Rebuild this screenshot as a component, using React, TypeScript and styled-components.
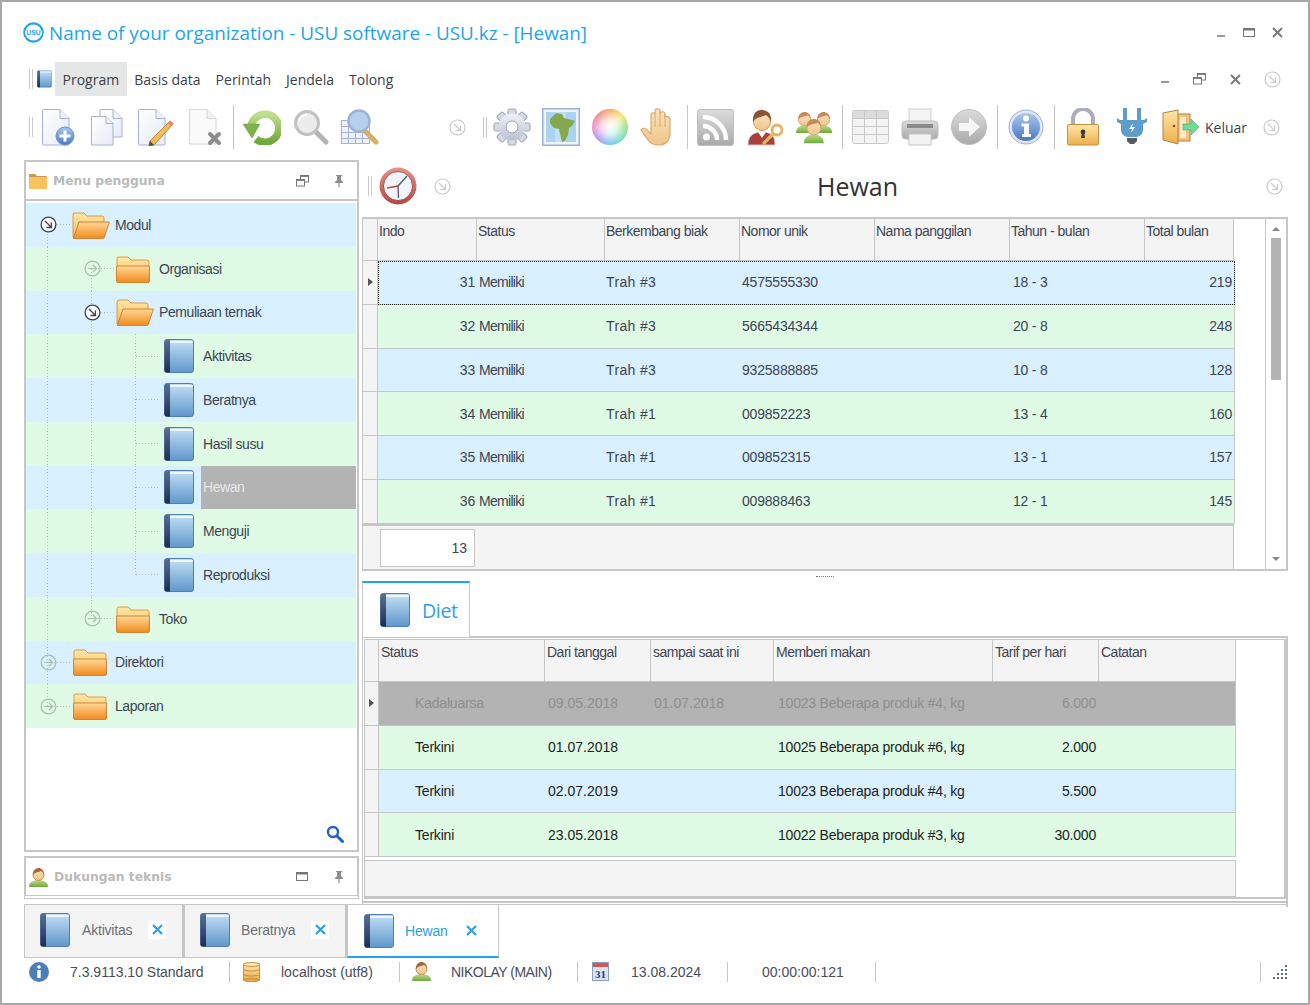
import React from 'react';
import styled, { createGlobalStyle } from 'styled-components';

const GlobalStyle = createGlobalStyle`
  html, body { margin: 0; padding: 0; background: #fff; }
  * { box-sizing: border-box; }
`;

const cellFont = `"Liberation Sans", Arial, sans-serif`;
const uiFont = `"Open Sans", "Noto Sans", sans-serif`;
const lineGray = '#c6c6c6';

/* ---------- icons ---------- */

const SharedDefs = () => (
  <svg width="0" height="0" style={{ position: 'absolute' }}>
    <defs>
      <linearGradient id="bookBody" x1="0" y1="0" x2="0" y2="1">
        <stop offset="0" stopColor="#c4e0f5" />
        <stop offset="1" stopColor="#5f97cc" />
      </linearGradient>
      <linearGradient id="bookSpine" x1="0" y1="0" x2="0" y2="1">
        <stop offset="0" stopColor="#5a6f96" />
        <stop offset="1" stopColor="#1f2d4c" />
      </linearGradient>
      <linearGradient id="folderBack" x1="0" y1="0" x2="0" y2="1">
        <stop offset="0" stopColor="#ffe9a8" />
        <stop offset="1" stopColor="#f7b85c" />
      </linearGradient>
      <linearGradient id="folderFront" x1="0" y1="0" x2="0" y2="1">
        <stop offset="0" stopColor="#ffd998" />
        <stop offset="1" stopColor="#f08a1d" />
      </linearGradient>
      <linearGradient id="paper" x1="0" y1="0" x2="1" y2="1">
        <stop offset="0" stopColor="#ffffff" />
        <stop offset="1" stopColor="#e6ebf7" />
      </linearGradient>
      <linearGradient id="greenRound" x1="0" y1="0" x2="0" y2="1">
        <stop offset="0" stopColor="#bfe08a" />
        <stop offset="1" stopColor="#6fa83c" />
      </linearGradient>
      <linearGradient id="steel" x1="0" y1="0" x2="0" y2="1">
        <stop offset="0" stopColor="#eef1f6" />
        <stop offset="1" stopColor="#b9c1d2" />
      </linearGradient>
      <linearGradient id="skin" x1="0" y1="0" x2="0" y2="1">
        <stop offset="0" stopColor="#fbe3bd" />
        <stop offset="1" stopColor="#f0c48a" />
      </linearGradient>
      <linearGradient id="grayRound" x1="0" y1="0" x2="0" y2="1">
        <stop offset="0" stopColor="#dcdcdc" />
        <stop offset="1" stopColor="#a9a9a9" />
      </linearGradient>
      <linearGradient id="blueRound" x1="0" y1="0" x2="0" y2="1">
        <stop offset="0" stopColor="#a9c8ee" />
        <stop offset="1" stopColor="#4a78c4" />
      </linearGradient>
      <linearGradient id="gold" x1="0" y1="0" x2="0" y2="1">
        <stop offset="0" stopColor="#fde7a8" />
        <stop offset="1" stopColor="#eeae4e" />
      </linearGradient>
      <linearGradient id="redRing" x1="0" y1="0" x2="0" y2="1">
        <stop offset="0" stopColor="#e8938a" />
        <stop offset="1" stopColor="#b5473f" />
      </linearGradient>
    </defs>
  </svg>
);

const BookIcon = ({ w = 30, h = 34 }: { w?: number; h?: number }) => (
  <svg width={w} height={h} viewBox="0 0 30 34">
    <rect x="0.5" y="0.5" width="29" height="33" rx="2.5" fill="url(#bookBody)" stroke="#4f7db5" />
    <path d="M0.5 3a2.5 2.5 0 0 1 2.5-2.5h3V33.5H3A2.5 2.5 0 0 1 .5 31z" fill="url(#bookSpine)" />
    <rect x="6" y="2" width="23" height="2" fill="#eef6fc" />
  </svg>
);

const FolderClosed = ({ w = 34, h = 28 }: { w?: number; h?: number }) => (
  <svg width={w} height={h} viewBox="0 0 34 28">
    <path d="M1 4a2 2 0 0 1 2-2h9l3 3h16a2 2 0 0 1 2 2v19H1z" fill="url(#folderBack)" stroke="#dc9a45" />
    <path d="M.6 11h32.8v15a1.6 1.6 0 0 1-1.6 1.6H2.2A1.6 1.6 0 0 1 .6 26z" fill="url(#folderFront)" stroke="#c8701a" strokeWidth=".8" />
  </svg>
);

const FolderOpen = () => (
  <svg width="38" height="28" viewBox="0 0 38 28">
    <path d="M1 26V4a2 2 0 0 1 2-2h9l3 3h15a2 2 0 0 1 2 2v6H8z" fill="url(#folderBack)" stroke="#dc9a45" />
    <path d="M7 11h30.4l-5 15.2a2 2 0 0 1-1.9 1.4H1.3z" fill="url(#folderFront)" stroke="#c8701a" strokeWidth=".8" />
  </svg>
);

const SmallArrow = () => (
  <svg width="17" height="17" viewBox="0 0 17 17" fill="none" stroke="#c9c9c9">
    <circle cx="8.5" cy="8.5" r="7.5" strokeWidth="1.2" />
    <path d="M5 5l6.2 6.2M11.5 6.5v5h-5" strokeWidth="1.2" />
  </svg>
);

const ToggleOpen = () => (
  <svg width="17" height="17" viewBox="0 0 17 17" fill="#fff" stroke="#3d4450">
    <circle cx="8.5" cy="8.5" r="7.4" strokeWidth="1.3" />
    <path d="M5 5l6 6M11.4 6.5v5h-5" fill="none" strokeWidth="1.3" />
  </svg>
);

const ToggleClosed = () => (
  <svg width="17" height="17" viewBox="0 0 17 17" fill="none" stroke="#a9bfae">
    <circle cx="8.5" cy="8.5" r="7.4" strokeWidth="1.2" />
    <path d="M4 8.5h8.5M9 5l3.6 3.5L9 12" strokeWidth="1.2" />
  </svg>
);

const MinimizeGlyph = () => (
  <svg width="10" height="10" viewBox="0 0 10 10"><rect x="1" y="7" width="8" height="2" fill="#9a9a9a" /></svg>
);
const MaximizeGlyph = () => (
  <svg width="12" height="10" viewBox="0 0 12 10" fill="none" stroke="#777"><rect x=".5" y=".5" width="11" height="8" /><path d="M0 1.5h12" strokeWidth="2" /></svg>
);
const RestoreGlyph = () => (
  <svg width="13" height="12" viewBox="0 0 13 12" fill="#fff" stroke="#777">
    <rect x="4.5" y=".5" width="8" height="6.5" /><path d="M4 1.4h9" />
    <rect x=".5" y="4.5" width="8" height="6.5" /><path d="M0 5.4h9" />
  </svg>
);
const CloseGlyph = ({ color = '#777', size = 11, weight = 1.8 }: { color?: string; size?: number; weight?: number }) => (
  <svg width={size} height={size} viewBox="0 0 11 11" stroke={color} strokeWidth={weight}>
    <path d="M1 1l9 9M10 1l-9 9" />
  </svg>
);
const PinGlyph = () => (
  <svg width="10" height="12" viewBox="0 0 10 12" fill="#8d8d8d">
    <path d="M2 0h6v1H7v4l2 2v1H5.6v4h-1.200V8H1V7l2-2V1H2z" />
  </svg>
);

const Page = ({ children, w = 38 }: { children?: React.ReactNode; w?: number }) => (
  <svg width={w} height="38" viewBox={`0 0 ${w} 38`}>
    <path d="M1.500 2.500a1 1 0 0 1 1-1H19l9 9V36a1 1 0 0 1-1 1H2.500a1 1 0 0 1-1-1z" fill="url(#paper)" stroke="#a6b2d4" />
    <path d="M19 1.500V10.500h9" fill="#eef1f8" stroke="#a6b2d4" />
    {children}
  </svg>
);

const DocAdd = () => (
  <Page w={34}>
    <circle cx="24" cy="28" r="9" fill="url(#blueRound)" stroke="#6d90bf" />
    <path d="M24 22.500v11M18.500 28h11" stroke="#fff" strokeWidth="3" />
  </Page>
);
const DocCopy = () => (
  <svg width="34" height="38" viewBox="0 0 34 38">
    <path d="M10 1.500h13l9 9V29H10z" fill="url(#paper)" stroke="#a6b2d4" />
    <path d="M23 1.500v9h9" fill="#eef1f8" stroke="#a6b2d4" />
    <path d="M1.500 8.500H16l7 7V37H1.500z" fill="url(#paper)" stroke="#a6b2d4" />
    <path d="M16 8.500v7h7" fill="#eef1f8" stroke="#a6b2d4" />
  </svg>
);
const DocEdit = () => (
  <Page>
    <path d="M33 13l3 3-19 21-5 1 1-5z" fill="#f4bd57" stroke="#b9843a" />
    <path d="M31 15l3 3 2.500-2.500-3-3z" fill="#e7837a" />
    <path d="M13 33l-1 5 5-1z" fill="#4a4a4a" />
  </Page>
);
const DocDelete = () => (
  <svg width="34" height="38" viewBox="0 0 34 38">
    <path d="M1.500 1.500H19l9 9V36H1.500z" fill="#fafafa" stroke="#d6d6d6" />
    <path d="M19 1.500v9h9" fill="#f1f1f1" stroke="#d6d6d6" />
    <path d="M22 26l9 9M31 26l-9 9" stroke="#8c8c8c" strokeWidth="4" strokeLinecap="round" />
  </svg>
);
const RefreshIcon = () => (
  <svg width="38" height="36" viewBox="0 0 38 36">
    <path d="M8 21a14 14 0 1 1 5 9" fill="none" stroke="url(#greenRound)" strokeWidth="7.500" />
    <path d="M0 15h17L9 29z" fill="#7fb14a" stroke="#6a9a3c" strokeWidth=".5" />
  </svg>
);
const MagnifierIcon = () => (
  <svg width="36" height="36" viewBox="0 0 36 36">
    <path d="M22 22l11 11" stroke="#b3b3b3" strokeWidth="5" strokeLinecap="round" />
    <circle cx="14" cy="14" r="11.500" fill="#ececec" stroke="#c2c2c2" strokeWidth="3" />
    <path d="M6 12a8 8 0 0 1 8-6" fill="none" stroke="#fff" strokeWidth="2" />
  </svg>
);
const TableSearchIcon = () => (
  <svg width="38" height="36" viewBox="0 0 38 36">
    <g fill="#eef1f9" stroke="#a6b2d4">
      <rect x=".5" y="11.500" width="28" height="23" />
      <path d="M.5 17.500h28M.5 23.500h28M.5 29.500h28M7.500 11.500v23M14.500 11.500v23M21.500 11.500v23" fill="none" />
    </g>
    <path d="M24 22l11 11" stroke="#dcae60" strokeWidth="5" strokeLinecap="round" />
    <circle cx="18" cy="12" r="10.500" fill="#b8d0f0" stroke="#9db3d3" strokeWidth="2.500" />
  </svg>
);
const GearIcon = () => (
  <svg width="38" height="38" viewBox="0 0 38 38">
    {[0, 45, 90, 135, 180, 225, 270, 315].map(a => (
      <rect key={a} x="15" y="1" width="8" height="9" rx="1.500" fill="#d3d9e5" stroke="#9aa3b8" transform={`rotate(${a} 19 19)`} />
    ))}
    <circle cx="19" cy="19" r="13.500" fill="url(#steel)" />
    <circle cx="19" cy="19" r="6" fill="#fff" stroke="#9aa3b8" />
  </svg>
);
const MapIcon = () => (
  <svg width="38" height="38" viewBox="0 0 38 38">
    <rect x=".75" y=".75" width="36.500" height="36.500" fill="#eef3fb" stroke="#9fb0d6" strokeWidth="1.500" />
    <rect x="4" y="4" width="30" height="30" fill="#a9d3ee" />
    <rect x="13" y="4" width="11" height="30" fill="#c2e0f3" />
    <path d="M8 11l6-6 6 1 2 4 8 2 3 1-3 5-3 2-1 7-3 6-3 1-2-8-1-5-5-1-4-5z" fill="#84a84f" />
  </svg>
);
const HandIcon = () => (
  <svg width="37" height="38" viewBox="0 0 37 38">
    <path d="M1 22c2-3 5-2 7 1l3 3V7c0-3 4-3 4 0V3c0-3 5-3 5 0v3c0-3 5-3 5 0v4c0-2 5-2 5 1v14c0 8-5 12-11 12-6 0-9-2-11-5z" fill="url(#skin)" stroke="#dbab6e" strokeWidth="1.200" />
    <path d="M15 7v12M20 5v14M25 6v13" stroke="#dbab6e" fill="none" />
  </svg>
);
const RssIcon = () => (
  <svg width="37" height="37" viewBox="0 0 37 37">
    <rect x=".5" y=".5" width="36" height="36" rx="2.500" fill="url(#grayRound)" stroke="#bcbcbc" />
    <circle cx="9.500" cy="28" r="3.500" fill="#fff" />
    <path d="M6 17a14 14 0 0 1 14 14M6 8a23 23 0 0 1 23 23" fill="none" stroke="#fff" strokeWidth="4.500" />
  </svg>
);
const UserKeyIcon = () => (
  <svg width="36" height="38" viewBox="0 0 36 38">
    <path d="M1 37c0-8 4-13 14-13s13 5 13 13z" fill="#a9403b" stroke="#c9c9c9" />
    <path d="M11 24l4 6 4-6z" fill="#fff" />
    <circle cx="15" cy="14" r="8.500" fill="url(#skin)" stroke="#d19a65" />
    <path d="M6 14c-1-9 5-13 10-12s9 4 8 12c-1-4-3-6-5-7-4 2-10 2-13 7z" fill="#8d5630" />
    <circle cx="30" cy="22" r="5" fill="none" stroke="#e5b661" strokeWidth="2.800" />
    <path d="M26.500 25.500L16 36" stroke="#e5b661" strokeWidth="3.200" />
  </svg>
);
const Person = ({ x, y, s = 1 }: { x: number; y: number; s?: number }) => (
  <g transform={`translate(${x} ${y}) scale(${s})`}>
    <path d="M0 22c0-5 4-8 9-8s9 3 9 8z" fill="url(#greenRound)" />
    <circle cx="9" cy="8" r="6.500" fill="url(#skin)" stroke="#d19a65" strokeWidth=".8" />
    <path d="M2.500 8C2 2 6 0 9 0s7 2 6.500 8c-1-3-2-4-3-4.500-3 1.500-8 1-10 4.500z" fill="#c7885a" />
  </g>
);
const UsersIcon = () => (
  <svg width="38" height="36" viewBox="0 0 38 36">
    <Person x={1} y={3} s={0.95} />
    <Person x={20} y={3} s={0.95} />
    <Person x={9} y={10} s={1.1} />
  </svg>
);
const GridIcon = () => (
  <svg width="37" height="34" viewBox="0 0 37 34">
    <rect x=".5" y=".5" width="36" height="33" rx="2" fill="#f4f4f4" stroke="#c8c8c8" />
    <rect x="1" y="1" width="35" height="7" fill="#dcdcdc" />
    <path d="M1 8.500h35M1 16.500h35M1 24.500h35M12.500 1v32M24.500 1v32" stroke="#c8c8c8" />
  </svg>
);
const PrinterIcon = () => (
  <svg width="38" height="38" viewBox="0 0 38 38">
    <rect x="8" y="1" width="22" height="16" fill="#f3f3f3" stroke="#cfcfcf" />
    <rect x="1" y="13" width="36" height="18" rx="4" fill="url(#grayRound)" stroke="#bdbdbd" />
    <rect x="6" y="16" width="26" height="4" fill="#8b8b8b" />
    <rect x="8" y="26" width="22" height="11" fill="#f2f2f2" stroke="#c6c6c6" />
  </svg>
);
const ArrowCircleIcon = () => (
  <svg width="36" height="36" viewBox="0 0 36 36">
    <circle cx="18" cy="18" r="17.500" fill="url(#grayRound)" stroke="#bdbdbd" />
    <path d="M8 14h10V8l11 10-11 10v-6H8z" fill="#f6f6f6" />
  </svg>
);
const InfoIcon = ({ size = 36 }: { size?: number }) => (
  <svg width={size} height={size} viewBox="0 0 36 36">
    <circle cx="18" cy="18" r="17" fill="#dfe7f7" stroke="#9bb0d8" />
    <circle cx="18" cy="18" r="14" fill="url(#blueRound)" />
    <circle cx="18" cy="9.500" r="3" fill="#fff" />
    <path d="M13.500 14.500H21V25h2v3H14v-3h2v-7.500h-2.500z" fill="#fff" />
  </svg>
);
const StatusInfo = () => (
  <svg width="20" height="20" viewBox="0 0 20 20">
    <circle cx="10" cy="10" r="10" fill="#4a7fb8" />
    <circle cx="10" cy="5" r="1.800" fill="#fff" />
    <rect x="8.300" y="8" width="3.400" height="8" fill="#fff" />
  </svg>
);
const LockIcon = () => (
  <svg width="32" height="38" viewBox="0 0 32 38">
    <path d="M6 18V11a10 10 0 0 1 20 0v7" fill="none" stroke="#a9aeb9" strokeWidth="4" />
    <rect x=".5" y="16.500" width="31" height="20.500" rx="1.500" fill="url(#gold)" stroke="#c98f3c" />
    <circle cx="16" cy="24" r="2.400" fill="#3d3d3d" />
    <path d="M14.800 25h2.400l.8 5h-4z" fill="#3d3d3d" />
  </svg>
);
const PlugIcon = () => (
  <svg width="30" height="38" viewBox="0 0 30 38">
    <rect x="6" y="0" width="4" height="12" fill="#5d9ccb" />
    <rect x="20" y="0" width="4" height="12" fill="#5d9ccb" />
    <path d="M0 10l3 2h24l3-2v4l-4 2v6a7 7 0 0 1-7 7h-8a7 7 0 0 1-7-7v-6l-4-2z" fill="#5d9ccb" />
    <path d="M16 15l-4 6h3l-1 4 4-6h-3z" fill="#fff" />
    <path d="M10 30h10v3l-3 3h-4l-3-3z" fill="#55585e" />
  </svg>
);
const ExitIcon = () => (
  <svg width="38" height="36" viewBox="0 0 38 36">
    <rect x="13" y="5" width="15" height="27" fill="#f2c27e" stroke="#b5813e" />
    <rect x="18" y="8" width="6" height="21" fill="#fbe9c8" />
    <path d="M1 4l15-3v34L1 31z" fill="url(#gold)" stroke="#b5813e" />
    <circle cx="12" cy="17" r="1.300" fill="#7a5324" />
    <path d="M21 15h8v-5l8 8-8 8v-5h-8z" fill="#6fdc97" stroke="#4eb276" strokeWidth=".7" />
  </svg>
);
const ClockIcon = () => (
  <svg width="38" height="38" viewBox="0 0 38 38">
    <circle cx="19" cy="19" r="18.500" fill="url(#redRing)" />
    <circle cx="19" cy="19" r="14.500" fill="#f1f5fa" stroke="#8c3b35" strokeWidth=".8" />
    <path d="M19 19L28 9" stroke="#4c5668" strokeWidth="1.300" />
    <path d="M19 19L19.500 31" stroke="#4c5668" strokeWidth="1.300" />
    <path d="M19 19L8 21" stroke="#c4433b" strokeWidth="1.300" />
  </svg>
);
const UsuLogo = () => (
  <svg width="21" height="21" viewBox="0 0 21 21">
    <circle cx="10.500" cy="10.500" r="9.200" fill="none" stroke="#1fa3ee" strokeWidth="2.200" />
    <rect x="2" y="7.500" width="17" height="6" rx="2.500" fill="#fff" />
    <text x="10.500" y="13" textAnchor="middle" fontSize="6.800" fontWeight="700" fill="#1fa3ee" fontFamily="Liberation Sans, sans-serif">USU</text>
  </svg>
);
const UserSmall = () => (
  <svg width="19" height="19" viewBox="0 0 19 19">
    <path d="M0 19c0-5 4-7 9.500-7s9.500 2 9.500 7z" fill="url(#greenRound)" />
    <circle cx="9.500" cy="7" r="5.500" fill="url(#skin)" stroke="#c98d5a" />
    <path d="M4 7c-.5-5 3-7 5.500-7S15.500 2 15 7c-1-3-2-3.500-3-4-2 1-6 1-8 4z" fill="#a9673d" />
  </svg>
);
const DbIcon = () => (
  <svg width="17" height="20" viewBox="0 0 17 20">
    <rect x=".5" y="2" width="16" height="16" fill="url(#gold)" stroke="#c98f3c" />
    <ellipse cx="8.500" cy="2.500" rx="8" ry="2" fill="#fde7b0" stroke="#c98f3c" />
    <ellipse cx="8.500" cy="18" rx="8" ry="1.600" fill="#eda941" stroke="#c98f3c" />
    <path d="M.5 7.500c3 2 13 2 16 0M.5 12.500c3 2 13 2 16 0" fill="none" stroke="#c98f3c" />
  </svg>
);
const CalendarIcon = () => (
  <svg width="17" height="19" viewBox="0 0 17 19">
    <rect x=".5" y=".5" width="16" height="18" fill="#dbe4f4" stroke="#8e9dbe" />
    <rect x="1" y="1" width="15" height="4" fill="#d2594f" />
    <text x="8.500" y="16" textAnchor="middle" fontSize="11" fontWeight="700" fill="#2a3f6c" fontFamily="Liberation Serif, serif">31</text>
  </svg>
);
const SearchBlue = () => (
  <svg width="18" height="18" viewBox="0 0 18 18" fill="none" stroke="#2463c0">
    <circle cx="7" cy="7" r="5" strokeWidth="2.400" />
    <path d="M11 11l5.500 5.500" strokeWidth="3" strokeLinecap="round" />
  </svg>
);
const FolderFlat = () => (
  <svg width="18" height="16" viewBox="0 0 18 16">
    <path d="M0 2a1 1 0 0 1 1-1h5l2 2h9a1 1 0 0 1 1 1v11H0z" fill="#c69a4a" />
    <rect y="4" width="18" height="12" fill="#fcc15f" />
  </svg>
);
const GripDots = () => (
  <svg width="15" height="15" viewBox="0 0 15 15" fill="#5b6b80">
    {[[12, 1], [12, 5], [8, 5], [12, 9], [8, 9], [4, 9], [12, 13], [8, 13], [4, 13], [0, 13]].map(([x, y]) => (
      <rect key={`${x}-${y}`} x={x} y={y} width="2" height="2" />
    ))}
  </svg>
);

/* ---------- window chrome ---------- */

const Window = styled.div`
  width: 1310px;
  height: 1005px;
  border: 2px solid #a8a8a8;
  background: #fff;
  display: flex;
  flex-direction: column;
  overflow: hidden;
  font-family: ${cellFont};
`;

const TitleBar = styled.div`
  height: 60px;
  flex: none;
  display: flex;
  align-items: center;
  padding: 1px 25px 0 21px;
`;

const TitleText = styled.div`
  margin-left: 5px;
  flex: 1;
  font-family: ${uiFont};
  font-size: 18.900px;
  color: #1fa3ee;
`;

const TitleControls = styled.div`
  display: flex;
  align-items: center;
  gap: 17px;
`;

const MenuBar = styled.div`
  height: 34px;
  flex: none;
  display: flex;
  align-items: center;
  padding-left: 27px;
`;

const Grip = styled.div`
  width: 4px;
  height: 20px;
  flex: none;
  border-left: 1px solid #c9c9c9;
  border-right: 1px solid #c9c9c9;
`;

const MenuIcon = styled.div`
  display: flex;
  margin: 0 3px 0 4px;
`;

const MenuItem = styled.div<{ $active?: boolean }>`
  height: 34px;
  padding: 0 7.500px;
  display: flex;
  align-items: center;
  font-family: ${uiFont};
  font-size: 14px;
  color: #3c3f4a;
  background: ${({ $active }) => ($active ? '#e5e6e6' : 'transparent')};
`;

const MenuControls = styled.div`
  margin-left: auto;
  padding-right: 18px;
  display: flex;
  align-items: center;
`;

const MenuControl = styled.div<{ $width: number }>`
  width: ${({ $width }) => $width}px;
  display: flex;
  justify-content: center;
`;

const Toolbar = styled.div`
  height: 46px;
  margin-top: 8px;
  flex: none;
  display: flex;
  align-items: center;
  padding-left: 27px;
`;

const ToolButton = styled.div`
  width: 49px;
  height: 46px;
  flex: none;
  display: flex;
  align-items: center;
  justify-content: center;
`;

const ToolSep = styled.div`
  width: 1px;
  height: 44px;
  flex: none;
  margin: 0 3.500px;
  background: #c4c4c4;
`;

const ToolArrow = styled.div<{ $left: number }>`
  margin-left: ${({ $left }) => $left}px;
  display: flex;
`;

const ToolLabel = styled.div`
  font-family: ${uiFont};
  font-size: 14px;
  color: #3c3f4a;
`;

const ColorWheel = styled.div`
  width: 36px;
  height: 36px;
  border-radius: 50%;
  background:
    radial-gradient(circle, #ffffff 0%, rgba(255, 255, 255, 0.75) 30%, rgba(255, 255, 255, 0) 75%),
    conic-gradient(#f7a35c, #f2e36b, #8ee07a, #5fdcb0, #6cc3ee, #a690ea, #e987c8, #f27f7f, #f7a35c);
`;

/* ---------- main area ---------- */

const Main = styled.div`
  height: 747px;
  margin-top: 10px;
  flex: none;
  display: flex;
  gap: 3px;
  padding-left: 22px;
`;

const LeftColumn = styled.div`
  width: 335px;
  flex: none;
  display: flex;
  flex-direction: column;
`;

const MenuPanel = styled.div`
  height: 692px;
  flex: none;
  border: 2px solid ${lineGray};
  display: flex;
  flex-direction: column;
`;

const PanelHeader = styled.div`
  height: 39px;
  flex: none;
  display: flex;
  align-items: center;
  padding: 1px 0 0 3px;
  border-bottom: 2px solid ${lineGray};
`;

const SupportPanel = styled.div`
  height: 43px;
  margin-top: 4px;
  flex: none;
  border: 2px solid ${lineGray};
  border-bottom-width: 4px;
  border-bottom-style: double;
  display: flex;
  align-items: center;
  padding: 1px 0 0 3px;
`;

const PanelTitle = styled.div`
  flex: 1;
  margin-left: 6px;
  font-family: "DejaVu Sans", sans-serif;
  font-weight: 700;
  font-size: 12.300px;
  color: #bababa;
`;

const PanelButton = styled.div<{ $width: number }>`
  width: ${({ $width }) => $width}px;
  display: flex;
  justify-content: center;
`;

const TreeArea = styled.div`
  flex: 1;
  padding: 2px 1px 0 0;
  display: flex;
  flex-direction: column;
`;

const TreeRow = styled.div<{ $tone: 'blue' | 'green' }>`
  height: 43.750px;
  flex: none;
  display: flex;
  background: ${({ $tone }) => ($tone === 'blue' ? '#d8f0ff' : '#dffbe5')};
`;

const dotted = 'repeating-linear-gradient(to bottom, #b9b9b9 0 1px, transparent 1px 3px)';
const dottedH = 'repeating-linear-gradient(to right, #b9b9b9 0 1px, transparent 1px 3px)';

/* a 44px indent column that carries the tree's dotted connector lines */
const Indent = styled.div<{ $line?: 'full' | 'top' | 'bottom'; $branch?: boolean }>`
  width: 44px;
  flex: none;
  display: flex;
  align-items: center;
  justify-content: center;
  background-image: ${({ $line }) => ($line ? dotted : 'none')}, ${({ $branch }) => ($branch ? dottedH : 'none')};
  background-repeat: no-repeat;
  background-position:
    21px ${({ $line }) => ($line === 'bottom' ? '100%' : '0')},
    100% 50%;
  background-size:
    1px ${({ $line }) => ($line === 'full' ? '100%' : '50%')},
    22px 1px;
`;

const NodeIcon = styled.div<{ $width: number; $pad: number }>`
  width: ${({ $width }) => $width}px;
  flex: none;
  display: flex;
  align-items: center;
  padding-left: ${({ $pad }) => $pad}px;
`;

const NodeLabel = styled.div<{ $selected?: boolean; $pad?: number }>`
  flex: ${({ $selected }) => ($selected ? 1 : 'none')};
  display: flex;
  align-items: center;
  padding-left: ${({ $pad }) => $pad ?? 1}px;
  font-size: 14px;
  letter-spacing: -0.420px;
  color: ${({ $selected }) => ($selected ? '#e8e8e8' : '#3d4453')};
  background: ${({ $selected }) => ($selected ? '#b3b3b3' : 'transparent')};
`;

const TreeFooter = styled.div`
  margin-top: auto;
  padding: 0 12px 7px 0;
  display: flex;
  justify-content: flex-end;
`;

/* ---------- right side ---------- */

const RightColumn = styled.div`
  width: 926px;
  flex: none;
  display: flex;
  flex-direction: column;
`;

const FormHeader = styled.div`
  height: 57px;
  flex: none;
  padding: 0 5px 5px 6px;
  display: flex;
  align-items: center;
`;

const FormClock = styled.div`
  margin-left: 7px;
  display: flex;
`;

const FormTitle = styled.div`
  flex: 1;
  text-align: center;
  font-family: ${uiFont};
  font-size: 25px;
  color: #333;
  padding-right: 2px;
`;

const MasterBox = styled.div`
  height: 354px;
  flex: none;
  border: 2px solid ${lineGray};
  border-left-width: 1px;
  display: flex;
`;

const GridWrap = styled.div<{ $width: number }>`
  width: ${({ $width }) => $width}px;
  flex: none;
  display: flex;
  flex-direction: column;
`;

const HeaderRow = styled.div<{ $cols: string; $height: number }>`
  height: ${({ $height }) => $height}px;
  flex: none;
  display: grid;
  grid-template-columns: ${({ $cols }) => $cols};
  background: #f4f4f4;
  border-bottom: 1px solid ${lineGray};
`;

const HeaderCell = styled.div<{ $pad: number }>`
  padding: 4px 0 0 ${({ $pad }) => $pad}px;
  font-size: 14px;
  letter-spacing: -0.500px;
  color: #3d4453;
  border-right: 1px solid ${lineGray};
  white-space: nowrap;
`;

const RowTone: Record<string, string> = {
  blue: '#d8f0ff',
  green: '#dffbe5',
  gray: '#b3b3b3',
};

const DataRow = styled.div<{ $cols: string }>`
  height: 43.750px;
  flex: none;
  display: grid;
  grid-template-columns: ${({ $cols }) => $cols};
  align-items: stretch;
`;

const Indicator = styled.div`
  background: #f4f4f4;
  border-right: 1px solid ${lineGray};
  border-bottom: 1px solid ${lineGray};
  display: flex;
  align-items: center;
  justify-content: center;
`;

const Triangle = styled.div`
  width: 0;
  height: 0;
  border-top: 4.500px solid transparent;
  border-bottom: 4.500px solid transparent;
  border-left: 5px solid #555;
`;

const RowBody = styled.div<{ $tone: string; $focus?: boolean; $cols: string }>`
  display: grid;
  grid-template-columns: ${({ $cols }) => $cols};
  background: ${({ $tone }) => RowTone[$tone]};
  border-bottom: 1px solid ${lineGray};
  border-right: 1px solid ${lineGray};
  outline: ${({ $focus }) => ($focus ? '1px dotted #222' : 'none')};
  outline-offset: -1px;
`;

const Cell = styled.div<{ $right?: boolean; $muted?: boolean; $dark?: boolean; $pad?: number; $spacing?: number }>`
  display: flex;
  align-items: center;
  justify-content: ${({ $right }) => ($right ? 'flex-end' : 'flex-start')};
  padding: ${({ $right, $pad }) => ($right ? `0 ${$pad ?? 3}px 0 0` : `0 0 0 ${$pad ?? 2}px`)};
  font-size: 14px;
  letter-spacing: ${({ $spacing }) => $spacing ?? -0.2}px;
  white-space: nowrap;
  color: ${({ $muted, $dark }) => ($muted ? '#8e8e8e' : $dark ? '#222' : '#3d4453')};
`;

const MasterFooter = styled.div`
  flex: 1;
  background: #f4f4f4;
  border-top: 2px solid ${lineGray};
  border-right: 1px solid ${lineGray};
  padding: 3px 0 0 17px;
`;

const CountBox = styled.div`
  width: 95px;
  height: 38px;
  border: 1px solid ${lineGray};
  background: #fff;
  display: flex;
  align-items: center;
  justify-content: flex-end;
  padding-right: 7px;
  font-size: 14px;
  color: #3d4453;
`;

const Blank = styled.div`
  flex: 1;
`;

const Scrollbar = styled.div`
  width: 21px;
  flex: none;
  border-left: 1px solid ${lineGray};
  display: flex;
  flex-direction: column;
  align-items: center;
  padding: 8px 0;
`;

const ArrowUp = styled.div`
  width: 0;
  height: 0;
  border-left: 4px solid transparent;
  border-right: 4px solid transparent;
  border-bottom: 4px solid #888;
`;

const ArrowDown = styled(ArrowUp)`
  margin-top: auto;
  border-bottom: 0;
  border-top: 4px solid #888;
`;

const Thumb = styled.div`
  width: 10px;
  height: 142px;
  margin-top: 7px;
  background: #b3b3b3;
`;

const Splitter = styled.div`
  height: 10px;
  flex: none;
  display: flex;
  justify-content: center;
  align-items: center;
`;

const SplitterDots = styled.div`
  width: 18px;
  border-top: 1px dotted #777;
`;

const DetailTabRow = styled.div`
  height: 55px;
  flex: none;
  display: flex;
`;

const DetailTab = styled.div`
  width: 108px;
  height: 56px;
  display: flex;
  align-items: center;
  gap: 12px;
  padding-left: 17px;
  background: #fff;
  border-top: 2px solid #1fa3ee;
  border-right: 1px solid ${lineGray};
  border-left: 1px solid ${lineGray};
  position: relative;
  z-index: 1;
  font-family: ${uiFont};
  font-size: 19.500px;
  letter-spacing: -0.300px;
  color: #2d9fe8;
`;

const DetailPanel = styled.div`
  height: 271px;
  flex: none;
  border: 2px solid ${lineGray};
  border-left-width: 1px;
  border-bottom: 0;
  padding: 1px 0 0 1px;
  display: flex;
  flex-direction: column;
`;

const DetailInner = styled.div`
  height: 260px;
  flex: none;
  border-top: 1px solid ${lineGray};
  border-left: 1px solid ${lineGray};
  border-right: 2px solid ${lineGray};
  border-bottom: 2px solid ${lineGray};
  display: flex;
  flex-direction: column;
`;

const DetailFooter = styled.div`
  width: 871px;
  height: 37px;
  margin-top: 3px;
  flex: none;
  background: #f4f4f4;
  border: 1px solid ${lineGray};
  border-left-width: 0;
`;

const DetailEdge = styled.div`
  margin: 2px 0 0 -2px;
  height: 4px;
  border-top: 2px solid ${lineGray};
  border-bottom: 1px solid ${lineGray};
`;

/* ---------- bottom ---------- */

const TabStrip = styled.div`
  height: 54px;
  margin-top: -3px;
  flex: none;
  display: flex;
  padding-left: 22px;
  position: relative;
`;

const DocTab = styled.div<{ $active?: boolean; $width: number }>`
  width: ${({ $width }) => $width}px;
  height: 54px;
  flex: none;
  display: flex;
  align-items: center;
  padding-left: ${({ $active }) => ($active ? 16 : 15)}px;
  padding-bottom: ${({ $active }) => ($active ? 0 : 3)}px;
  background: ${({ $active }) => ($active ? '#fff' : '#f4f4f4')};
  border: 1px solid ${lineGray};
  border-right-width: ${({ $active }) => ($active ? 1 : 2)}px;
  border-bottom: ${({ $active }) => ($active ? '2px solid #1fa3ee' : `1px solid ${lineGray}`)};
`;

const DocTabLabel = styled.div<{ $active?: boolean; $gap: number; $width: number }>`
  margin-left: ${({ $gap }) => $gap}px;
  width: ${({ $width }) => $width}px;
  font-size: 14px;
  letter-spacing: -0.200px;
  color: ${({ $active }) => ($active ? '#2d9fe8' : '#6c6f78')};
`;

const TabClose = styled.div`
  width: 18px;
  height: 18px;
  display: flex;
  align-items: center;
  justify-content: center;
  background: #fff;
`;

const StatusBar = styled.div`
  height: 27px;
  flex: none;
  display: flex;
  align-items: center;
  padding-left: 27px;
`;

const StatusCell = styled.div<{ $width: number; $pad: number; $gap: number; $spacing?: number }>`
  width: ${({ $width }) => $width}px;
  height: 20px;
  flex: none;
  display: flex;
  align-items: center;
  gap: ${({ $gap }) => $gap}px;
  padding-left: ${({ $pad }) => $pad}px;
  border-right: 1px solid ${lineGray};
  font-size: 14px;
  letter-spacing: ${({ $spacing }) => $spacing ?? 0}px;
  color: #4a4d57;
  white-space: nowrap;
`;

const StatusEnd = styled.div`
  margin-left: auto;
  width: 48px;
  height: 20px;
  border-left: 1px solid ${lineGray};
  display: flex;
  align-items: center;
  justify-content: flex-start;
  padding-left: 12px;
`;

/* ---------- data ---------- */

const masterCols = '15px 99px 128px 135px 135px 135px 135px 89px';
const masterBodyCols = '99px 128px 135px 135px 135px 135px 89px';
const masterHeaders = ['Indo', 'Status', 'Berkembang biak', 'Nomor unik', 'Nama panggilan', 'Tahun - bulan', 'Total bulan'];
const masterRows = [
  ['31', 'Memiliki', 'Trah #3', '4575555330', '18 - 3', '219'],
  ['32', 'Memiliki', 'Trah #3', '5665434344', '20 - 8', '248'],
  ['33', 'Memiliki', 'Trah #3', '9325888885', '10 - 8', '128'],
  ['34', 'Memiliki', 'Trah #1', '009852223', '13 - 4', '160'],
  ['35', 'Memiliki', 'Trah #1', '009852315', '13 - 1', '157'],
  ['36', 'Memiliki', 'Trah #1', '009888463', '12 - 1', '145'],
];

const detailCols = '14px 166px 106px 123px 219px 106px 137px';
const detailBodyCols = '166px 106px 123px 219px 106px 136px';
const detailHeaders = ['Status', 'Dari tanggal', 'sampai saat ini', 'Memberi makan', 'Tarif per hari', 'Catatan'];
const detailRows = [
  ['Kadaluarsa', '09.05.2018', '01.07.2018', '10023 Beberapa produk #4, kg', '6.000'],
  ['Terkini', '01.07.2018', '', '10025 Beberapa produk #6, kg', '2.000'],
  ['Terkini', '02.07.2019', '', '10023 Beberapa produk #4, kg', '5.500'],
  ['Terkini', '23.05.2018', '', '10022 Beberapa produk #3, kg', '30.000'],
];

const bookNodes = ['Aktivitas', 'Beratnya', 'Hasil susu', 'Hewan', 'Menguji', 'Reproduksi'];

const Toggle = ({ open }: { open?: boolean }) => (open ? <ToggleOpen /> : <ToggleClosed />);

function Tree() {
  return (
    <TreeArea>
      <TreeRow $tone="blue">
        <Indent $line="bottom" $branch><Toggle open /></Indent>
        <NodeIcon $width={44} $pad={2}><FolderOpen /></NodeIcon>
        <NodeLabel>Modul</NodeLabel>
      </TreeRow>
      <TreeRow $tone="green">
        <Indent $line="full" />
        <Indent $line="bottom" $branch><Toggle /></Indent>
        <NodeIcon $width={44} $pad={2}><FolderClosed /></NodeIcon>
        <NodeLabel>Organisasi</NodeLabel>
      </TreeRow>
      <TreeRow $tone="blue">
        <Indent $line="full" />
        <Indent $line="full" $branch><Toggle open /></Indent>
        <NodeIcon $width={44} $pad={2}><FolderOpen /></NodeIcon>
        <NodeLabel>Pemuliaan ternak</NodeLabel>
      </TreeRow>
      {bookNodes.map((name, i) => (
        <TreeRow key={name} $tone={i % 2 === 0 ? 'green' : 'blue'}>
          <Indent $line="full" />
          <Indent $line="full" />
          <Indent $line={i === bookNodes.length - 1 ? 'top' : 'full'} $branch />
          <NodeIcon $width={43} $pad={6}><BookIcon /></NodeIcon>
          <NodeLabel $selected={name === 'Hewan'} $pad={2}>{name}</NodeLabel>
        </TreeRow>
      ))}
      <TreeRow $tone="green">
        <Indent $line="full" />
        <Indent $line="top" $branch><Toggle /></Indent>
        <NodeIcon $width={44} $pad={2}><FolderClosed /></NodeIcon>
        <NodeLabel>Toko</NodeLabel>
      </TreeRow>
      <TreeRow $tone="blue">
        <Indent $line="full" $branch><Toggle /></Indent>
        <NodeIcon $width={44} $pad={2}><FolderClosed w={36} h={28} /></NodeIcon>
        <NodeLabel>Direktori</NodeLabel>
      </TreeRow>
      <TreeRow $tone="green">
        <Indent $line="top" $branch><Toggle /></Indent>
        <NodeIcon $width={44} $pad={2}><FolderClosed w={36} h={28} /></NodeIcon>
        <NodeLabel>Laporan</NodeLabel>
      </TreeRow>
      <TreeFooter><SearchBlue /></TreeFooter>
    </TreeArea>
  );
}

function MasterGrid() {
  return (
    <MasterBox>
      <GridWrap $width={871}>
        <HeaderRow $cols={masterCols} $height={42}>
          <HeaderCell $pad={1} />
          {masterHeaders.map(h => <HeaderCell key={h} $pad={1}>{h}</HeaderCell>)}
        </HeaderRow>
        {masterRows.map((r, i) => (
          <DataRow key={r[0]} $cols="15px 1fr">
            <Indicator>{i === 0 && <Triangle />}</Indicator>
            <RowBody $cols={masterBodyCols} $tone={i % 2 === 0 ? 'blue' : 'green'} $focus={i === 0}>
              <Cell $right $pad={2}>{r[0]}</Cell>
              <Cell $spacing={-0.7}>{r[1]}</Cell>
              <Cell $pad={1} $spacing={0.35}>{r[2]}</Cell>
              <Cell>{r[3]}</Cell>
              <Cell />
              <Cell $pad={3}>{r[4]}</Cell>
              <Cell $right $pad={2}>{r[5]}</Cell>
            </RowBody>
          </DataRow>
        ))}
        <MasterFooter><CountBox>13</CountBox></MasterFooter>
      </GridWrap>
      <Blank />
      <Scrollbar>
        <ArrowUp />
        <Thumb />
        <ArrowDown />
      </Scrollbar>
    </MasterBox>
  );
}

function DetailGrid() {
  return (
    <DetailPanel>
      <DetailInner>
        <GridWrap $width={871}>
          <HeaderRow $cols={detailCols} $height={42}>
            <HeaderCell $pad={2} />
            {detailHeaders.map(h => <HeaderCell key={h} $pad={2}>{h}</HeaderCell>)}
          </HeaderRow>
          {detailRows.map((r, i) => {
            const expired = i === 0;
            return (
              <DataRow key={r[1]} $cols="14px 1fr">
                <Indicator>{expired && <Triangle />}</Indicator>
                <RowBody $cols={detailBodyCols} $tone={expired ? 'gray' : i % 2 === 1 ? 'green' : 'blue'}>
                  <Cell $pad={36} $muted={expired} $dark={!expired}>{r[0]}</Cell>
                  <Cell $pad={3} $spacing={0} $muted={expired} $dark={!expired}>{r[1]}</Cell>
                  <Cell $pad={3} $spacing={0} $muted={expired} $dark={!expired}>{r[2]}</Cell>
                  <Cell $pad={4} $muted={expired} $dark={!expired}>{r[3]}</Cell>
                  <Cell $right $muted={expired} $dark={!expired}>{r[4]}</Cell>
                  <Cell />
                </RowBody>
              </DataRow>
            );
          })}
          <DetailFooter />
        </GridWrap>
      </DetailInner>
      <DetailEdge />
    </DetailPanel>
  );
}

export default function App() {
  return (
    <>
      <GlobalStyle />
      <SharedDefs />
      <Window>
        <TitleBar>
          <UsuLogo />
          <TitleText>Name of your organization - USU software - USU.kz - [Hewan]</TitleText>
          <TitleControls>
            <MinimizeGlyph />
            <MaximizeGlyph />
            <CloseGlyph />
          </TitleControls>
        </TitleBar>

        <MenuBar>
          <Grip />
          <MenuIcon><BookIcon w={15} h={18} /></MenuIcon>
          <MenuItem $active>Program</MenuItem>
          <MenuItem>Basis data</MenuItem>
          <MenuItem>Perintah</MenuItem>
          <MenuItem>Jendela</MenuItem>
          <MenuItem>Tolong</MenuItem>
          <MenuControls>
            <MenuControl $width={34}><MinimizeGlyph /></MenuControl>
            <MenuControl $width={34}><RestoreGlyph /></MenuControl>
            <MenuControl $width={38}><CloseGlyph /></MenuControl>
            <MenuControl $width={36}><SmallArrow /></MenuControl>
          </MenuControls>
        </MenuBar>

        <Toolbar>
          <Grip />
          <ToolButton><DocAdd /></ToolButton>
          <ToolButton><DocCopy /></ToolButton>
          <ToolButton><DocEdit /></ToolButton>
          <ToolButton><DocDelete /></ToolButton>
          <ToolSep />
          <ToolButton><RefreshIcon /></ToolButton>
          <ToolButton><MagnifierIcon /></ToolButton>
          <ToolButton><TableSearchIcon /></ToolButton>
          <ToolArrow $left={65}><SmallArrow /></ToolArrow>
          <ToolArrow $left={17}><Grip /></ToolArrow>
          <ToolButton><GearIcon /></ToolButton>
          <ToolButton><MapIcon /></ToolButton>
          <ToolButton><ColorWheel /></ToolButton>
          <ToolButton><HandIcon /></ToolButton>
          <ToolSep />
          <ToolButton><RssIcon /></ToolButton>
          <ToolButton><UserKeyIcon /></ToolButton>
          <ToolButton><UsersIcon /></ToolButton>
          <ToolSep />
          <ToolButton><GridIcon /></ToolButton>
          <ToolButton><PrinterIcon /></ToolButton>
          <ToolButton><ArrowCircleIcon /></ToolButton>
          <ToolSep />
          <ToolButton><InfoIcon /></ToolButton>
          <ToolSep />
          <ToolButton><LockIcon /></ToolButton>
          <ToolButton><PlugIcon /></ToolButton>
          <ToolButton><ExitIcon /></ToolButton>
          <ToolLabel>Keluar</ToolLabel>
          <ToolArrow $left={16}><SmallArrow /></ToolArrow>
        </Toolbar>

        <Main>
          <LeftColumn>
            <MenuPanel>
              <PanelHeader>
                <FolderFlat />
                <PanelTitle>Menu pengguna</PanelTitle>
                <PanelButton $width={38}><RestoreGlyph /></PanelButton>
                <PanelButton $width={36}><PinGlyph /></PanelButton>
              </PanelHeader>
              <Tree />
            </MenuPanel>
            <SupportPanel>
              <UserSmall />
              <PanelTitle>Dukungan teknis</PanelTitle>
              <PanelButton $width={38}><MaximizeGlyph /></PanelButton>
              <PanelButton $width={36}><PinGlyph /></PanelButton>
            </SupportPanel>
          </LeftColumn>

          <RightColumn>
            <FormHeader>
              <Grip />
              <FormClock><ClockIcon /></FormClock>
              <ToolArrow $left={17}><SmallArrow /></ToolArrow>
              <FormTitle>Hewan</FormTitle>
              <SmallArrow />
            </FormHeader>
            <MasterGrid />
            <Splitter><SplitterDots /></Splitter>
            <DetailTabRow>
              <DetailTab><BookIcon />Diet</DetailTab>
            </DetailTabRow>
            <DetailGrid />
          </RightColumn>
        </Main>

        <TabStrip>
          <DocTab $width={160}>
            <BookIcon />
            <DocTabLabel $gap={12} $width={66}>Aktivitas</DocTabLabel>
            <TabClose><CloseGlyph color="#2d9fe8" size={11} weight={2.200} /></TabClose>
          </DocTab>
          <DocTab $width={163}>
            <BookIcon />
            <DocTabLabel $gap={11} $width={70}>Beratnya</DocTabLabel>
            <TabClose><CloseGlyph color="#2d9fe8" size={11} weight={2.200} /></TabClose>
          </DocTab>
          <DocTab $width={152} $active>
            <BookIcon />
            <DocTabLabel $active $gap={11} $width={57}>Hewan</DocTabLabel>
            <TabClose><CloseGlyph color="#2d9fe8" size={11} weight={2.200} /></TabClose>
          </DocTab>
        </TabStrip>

        <StatusBar>
          <StatusCell $width={201} $pad={0} $gap={21}><StatusInfo />7.3.9113.10 Standard</StatusCell>
          <StatusCell $width={170} $pad={13} $gap={21}><DbIcon />localhost (utf8)</StatusCell>
          <StatusCell $width={178} $pad={12} $gap={20} $spacing={-0.5}><UserSmall />NIKOLAY (MAIN)</StatusCell>
          <StatusCell $width={150} $pad={14} $gap={22}><CalendarIcon />13.08.2024</StatusCell>
          <StatusCell $width={148} $pad={34} $gap={0}>00:00:00:121</StatusCell>
          <StatusEnd><GripDots /></StatusEnd>
        </StatusBar>
      </Window>
    </>
  );
}
